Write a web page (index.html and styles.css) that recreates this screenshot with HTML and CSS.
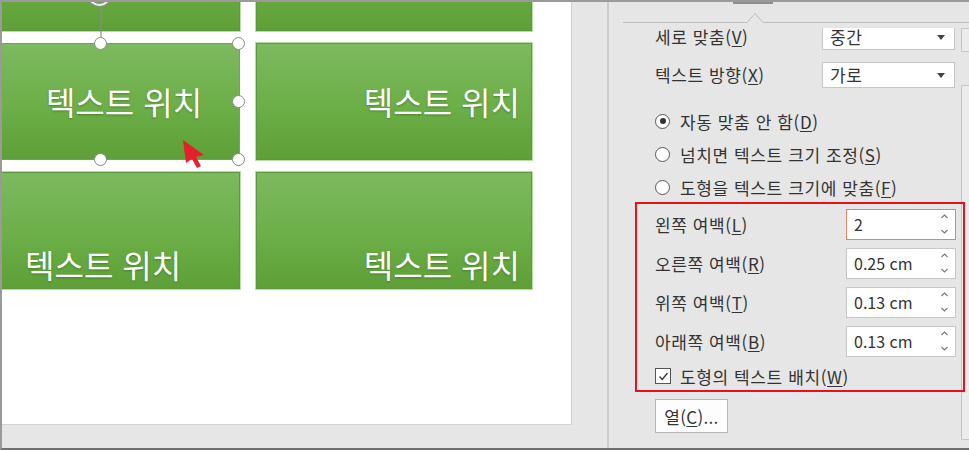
FILE: index.html
```html
<!DOCTYPE html>
<html lang="ko">
<head>
  <meta charset="UTF-8">
  <title>도형 서식 - 텍스트 상자</title>
  <link rel="stylesheet" href="styles.css">
</head>
<body>
  <div class="window">
    <div class="editor">
      <div class="slide">
        <div class="shapes">
          <div class="shape"></div>
          <div class="shape"></div>
          <div class="shape center selected">
            <span class="shape-text">텍스트 위치</span>
            <svg class="rotate" width="30" height="50" viewBox="0 0 30 50">
              <path d="M24 2 A11 11 0 1 1 15 -6" fill="none" stroke="#8a8a8a" stroke-width="4"/>
              <path d="M24 2 A11 11 0 1 1 15 -6" fill="none" stroke="#f4f0f8" stroke-width="2"/>
              <line x1="15" y1="17" x2="15" y2="49" stroke="#8a8a8a" stroke-width="1.2"/>
            </svg>
            <i class="handle h-tm"></i>
            <i class="handle h-tr"></i>
            <i class="handle h-mr"></i>
            <i class="handle h-bm"></i>
            <i class="handle h-br"></i>
          </div>
          <div class="shape right">
            <span class="shape-text">텍스트 위치</span>
          </div>
          <div class="shape bottom-left">
            <span class="shape-text">텍스트 위치</span>
          </div>
          <div class="shape bottom-right">
            <span class="shape-text">텍스트 위치</span>
          </div>
        </div>
        <svg class="cursor" width="28" height="36" viewBox="0 0 28 36">
          <path d="M3 3 L24 18 L16 20 L21 29 L17 31 L12 22 L6 26 Z" fill="#e5202b"/>
        </svg>
      </div>
    </div>

    <aside class="panel">
      <div class="panel-head">
        <div class="tab-mark"></div>
        <svg class="head-line" width="360" height="24" viewBox="0 0 360 24">
          <path d="M14 18.5 H138 L146 9.5 L154 18.5 H360" fill="none" stroke="#bdbdbd"/>
        </svg>
      </div>

      <div class="panel-body">
        <div class="form">
          <div class="field">
            <span class="label">세로 맞춤(<u>V</u>)</span>
            <div class="select">중간<span class="caret"></span></div>
          </div>
          <div class="field">
            <span class="label">텍스트 방향(<u>X</u>)</span>
            <div class="select">가로<span class="caret"></span></div>
          </div>

          <div class="radios">
            <div class="option"><span class="radio checked"></span>자동 맞춤 안 함(<u>D</u>)</div>
            <div class="option"><span class="radio"></span>넘치면 텍스트 크기 조정(<u>S</u>)</div>
            <div class="option"><span class="radio"></span>도형을 텍스트 크기에 맞춤(<u>F</u>)</div>
          </div>

          <div class="margins">
            <div class="margin-row">
              <span class="label">왼쪽 여백(<u>L</u>)</span>
              <div class="spin focused">2
                <svg class="arrows" width="9" height="22" viewBox="0 0 9 22"><path d="M1.5 5 L4.5 2 L7.5 5 M1.5 17 L4.5 20 L7.5 17" fill="none" stroke="#777" stroke-width="1.1"/></svg>
              </div>
            </div>
            <div class="margin-row">
              <span class="label">오른쪽 여백(<u>R</u>)</span>
              <div class="spin">0.25 cm
                <svg class="arrows" width="9" height="22" viewBox="0 0 9 22"><path d="M1.5 5 L4.5 2 L7.5 5 M1.5 17 L4.5 20 L7.5 17" fill="none" stroke="#777" stroke-width="1.1"/></svg>
              </div>
            </div>
            <div class="margin-row">
              <span class="label">위쪽 여백(<u>T</u>)</span>
              <div class="spin">0.13 cm
                <svg class="arrows" width="9" height="22" viewBox="0 0 9 22"><path d="M1.5 5 L4.5 2 L7.5 5 M1.5 17 L4.5 20 L7.5 17" fill="none" stroke="#777" stroke-width="1.1"/></svg>
              </div>
            </div>
            <div class="margin-row">
              <span class="label">아래쪽 여백(<u>B</u>)</span>
              <div class="spin">0.13 cm
                <svg class="arrows" width="9" height="22" viewBox="0 0 9 22"><path d="M1.5 5 L4.5 2 L7.5 5 M1.5 17 L4.5 20 L7.5 17" fill="none" stroke="#777" stroke-width="1.1"/></svg>
              </div>
            </div>
            <div class="option check-row">
              <span class="checkbox">
                <svg width="13" height="13" viewBox="0 0 13 13"><path d="M2.5 6.5 L5.2 9.5 L10.5 3" fill="none" stroke="#333" stroke-width="1.3"/></svg>
              </span>도형의 텍스트 배치(<u>W</u>)
            </div>
          </div>

          <button class="btn">열(<u>C</u>)...</button>
        </div>

        <div class="scrollbar">
          <div class="sb-btn"></div>
          <div class="sb-thumb"></div>
        </div>
      </div>
    </aside>
  </div>
</body>
</html>
```

FILE: styles.css
```css
* {
  box-sizing: border-box;
}
body {
  margin: 0;
  font-family: "Noto Sans CJK KR", "Noto Sans", sans-serif;
}
.window {
  width: 969px;
  height: 450px;
  display: flex;
  background: #e6e6e6;
  border-top: 2px solid #9a9a9a;
  border-left: 2px solid #9a9a9a;
  border-bottom: 2px solid #6f6f6f;
  overflow: hidden;
}

/* slide editor */
.editor {
  width: 607px;
  border-right: 2px solid #cdcdcd;
}
.slide {
  position: relative;
  width: 570px;
  height: 423px;
  background: #fff;
  border-right: 1px solid #cfcfcf;
  border-bottom: 1px solid #d4d4d4;
  overflow: hidden;
}
.shapes {
  display: grid;
  grid-template-columns: 280px 276px;
  grid-template-rows: repeat(3, 117px);
  gap: 12px 16px;
  margin: -88px 0 0 -42px;
}
.shape {
  position: relative;
  display: flex;
  background: linear-gradient(#7db960, #6cae47 55%, #5e9f37);
  border: 1px solid #5c9a38;
  box-shadow: 0 0 0 1px #b9dca6;
  color: #fff;
  font-size: 32px;
  line-height: 1.2;
}
.shape-text {
  text-shadow: 0 1px 2px rgba(40, 80, 20, 0.45);
  white-space: nowrap;
}
.shape.center {
  align-items: center;
  justify-content: center;
  padding: 0 9px 0 57px;
}
.shape.right {
  align-items: center;
  justify-content: flex-end;
  padding-right: 11px;
}
.shape.bottom-left {
  align-items: flex-end;
  padding: 0 0 5px 64px;
}
.shape.bottom-right {
  align-items: flex-end;
  justify-content: flex-end;
  padding: 0 11px 5px 0;
}
.shape.selected {
  border-color: #8d8d8d;
  box-shadow: none;
}
.rotate {
  position: absolute;
  left: 125px;
  top: -55px;
}
.handle {
  position: absolute;
  width: 13px;
  height: 13px;
  border: 1.5px solid #8a8a8a;
  border-radius: 50%;
  background: #fff;
}
.h-tm { left: 133px; top: -7px; }
.h-tr { left: 271px; top: -7px; }
.h-mr { left: 271px; top: 51px; }
.h-bm { left: 133px; top: 109px; }
.h-br { left: 271px; top: 109px; }
.cursor {
  position: absolute;
  left: 178px;
  top: 135px;
}

/* format pane */
.panel {
  flex: 1;
  display: flex;
  flex-direction: column;
  color: #333;
  font-size: 17px;
  letter-spacing: 0.6px;
}
.panel-head {
  height: 26px;
}
.tab-mark {
  width: 40px;
  height: 2px;
  margin-left: 124px;
  background: #8f8f8f;
}
.head-line {
  display: block;
}
.panel-body {
  flex: 1;
  display: flex;
  overflow: hidden;
}
.form {
  flex: 1;
  padding-left: 46px;
}
.label {
  line-height: 18px;
}
.label u,
.option u,
.btn u {
  text-underline-offset: 2px;
}
.field {
  display: grid;
  grid-template-columns: 167px 133px;
  align-items: center;
  margin-bottom: 12px;
}
.field:first-child {
  margin-top: -4px;
}
.select {
  position: relative;
  height: 26px;
  line-height: 24px;
  padding-left: 7px;
  background: #fff;
  border: 1px solid #c6c6c6;
}
.caret {
  position: absolute;
  right: 9px;
  top: 10px;
  border-left: 4px solid transparent;
  border-right: 4px solid transparent;
  border-top: 5px solid #444;
}
.radios {
  display: flex;
  flex-direction: column;
  gap: 9px;
  margin-top: 21px;
}
.option {
  display: flex;
  align-items: center;
  height: 24px;
}
.radio {
  position: relative;
  width: 15px;
  height: 15px;
  margin-right: 10px;
  border: 1px solid #555;
  border-radius: 50%;
  background: #fff;
}
.radio.checked::after {
  content: "";
  position: absolute;
  left: 3.5px;
  top: 3.5px;
  width: 6px;
  height: 6px;
  border-radius: 50%;
  background: #333;
}
.margins {
  position: relative;
  z-index: 1;
  display: flex;
  flex-direction: column;
  gap: 8px;
  margin: 3px -4px 0 -20px;
  padding: 5px 0 4px 18px;
  border: 2px solid #e8111e;
}
.margin-row {
  display: grid;
  grid-template-columns: 191px 110px;
  align-items: center;
}
.spin {
  position: relative;
  height: 31px;
  line-height: 29px;
  padding-left: 7px;
  background: #fff;
  border: 1px solid #c6c6c6;
  font-size: 16px;
  letter-spacing: 0;
}
.spin.focused {
  border-color: #e6826c;
}
.arrows {
  position: absolute;
  right: 6px;
  top: 3px;
}
.check-row {
  height: 20px;
  margin-top: 1px;
}
.checkbox {
  display: flex;
  align-items: center;
  justify-content: center;
  width: 16px;
  height: 16px;
  margin-right: 9px;
  border: 1px solid #555;
  background: #fff;
}
.btn {
  display: block;
  width: 73px;
  height: 34px;
  margin-top: 7px;
  padding: 0;
  border: 1px solid #b7b7b7;
  background: #fdfdfd;
  color: #333;
  font-family: inherit;
  font-size: 17px;
  letter-spacing: 0.3px;
}
.scrollbar {
  width: 8px;
}
.sb-btn,
.sb-thumb {
  border: 1px solid #c4c4c4;
  border-right: none;
  border-radius: 2px 0 0 2px;
  background: #ececec;
}
.sb-btn {
  height: 24px;
}
.sb-thumb {
  height: 355px;
  margin-top: 33px;
}
```
